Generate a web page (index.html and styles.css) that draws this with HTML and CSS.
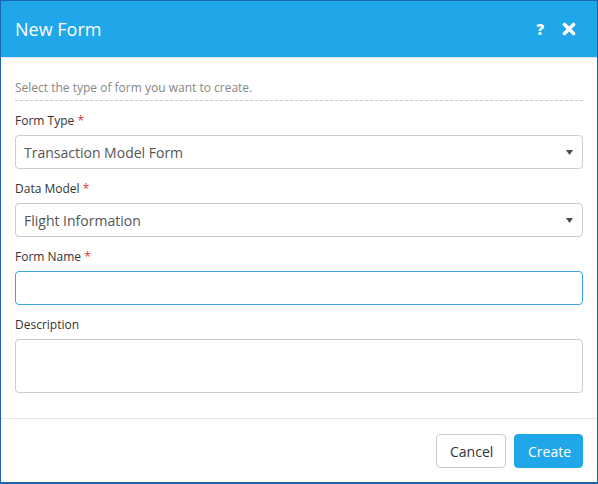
FILE: index.html
```html
<!DOCTYPE html>
<html>
<head>
<meta charset="utf-8">
<link rel="stylesheet" href="styles.css">
</head>
<body>
<div class="dialog">
  <div class="header">
    <div class="title">New Form</div>
    <div class="tools">
      <span class="help">?</span>
      <svg class="close" width="14" height="14" viewBox="0 0 14 14"><path d="M2.5 2.5 L11.5 11.5 M11.5 2.5 L2.5 11.5" stroke="#fff" stroke-width="3.6" stroke-linecap="round"/></svg>
    </div>
  </div>
  <div class="body">
    <div class="intro">Select the type of form you want to create.</div>
    <div class="group">
      <div class="label">Form Type <span class="req">*</span></div>
      <div class="select"><span>Transaction Model Form</span><svg width="7" height="5" viewBox="0 0 7 5"><path d="M0 0 H7 L3.5 5 Z" fill="#4a4a4a"/></svg></div>
    </div>
    <div class="group">
      <div class="label">Data Model <span class="req">*</span></div>
      <div class="select"><span>Flight Information</span><svg width="7" height="5" viewBox="0 0 7 5"><path d="M0 0 H7 L3.5 5 Z" fill="#4a4a4a"/></svg></div>
    </div>
    <div class="group">
      <div class="label">Form Name <span class="req">*</span></div>
      <div class="input focus"></div>
    </div>
    <div class="group">
      <div class="label">Description</div>
      <div class="textarea"></div>
    </div>
  </div>
  <div class="footer">
    <button class="btn cancel">Cancel</button>
    <button class="btn create">Create</button>
  </div>
</div>
</body>
</html>
```
FILE: styles.css
```css
html, body { margin: 0; padding: 0; }
body { font-family: "Open Sans", "Noto Sans", sans-serif; background: #fff; }
.dialog {
  width: 598px; height: 484px; box-sizing: border-box;
  border: 1px solid #1c64ad; border-bottom-width: 2px;
  display: flex; flex-direction: column; background: #fff;
}
.header {
  height: 56px; background: #1fa7ea; border-bottom: 1px solid #e3e3e3;
  display: flex; align-items: center; justify-content: space-between;
  padding: 0 14px;
}
.title { color: #fff; font-size: 18px; line-height: 24px; margin-top: -1px; }
.tools { display: flex; align-items: center; gap: 18px; padding-right: 7px; }
.help { color: #fff; font-weight: 800; font-size: 15px; line-height: 14px; }
.close { display: block; }
.body { flex: 1; padding: 0 14px; }
.intro {
  font-size: 12px; color: #888; line-height: 17px;
  padding-top: 21px; padding-bottom: 4px;
  border-bottom: 1px dashed #c8c8c8;
}
.group { margin-top: 10px; }
.label { font-size: 12px; line-height: 20px; color: #333; margin-bottom: 4px; }
.req { color: #e8322c; }
.select, .input, .textarea {
  box-sizing: border-box; border: 1px solid #ccc; border-radius: 4px; background: #fff;
}
.select {
  height: 34px; display: flex; align-items: center; justify-content: space-between;
  padding: 0 8px 0 8px; font-size: 14px; color: #555;
}
.select svg { display: block; margin-right: 1px; }
.input { height: 34px; }
.input.focus { border-color: #3aa3e0; }
.textarea { height: 54px; }
.footer {
  height: 64px; box-sizing: border-box; border-top: 1px solid #e5e5e5;
  display: flex; justify-content: flex-end; align-items: flex-start;
  padding: 15px 14px 0 0; gap: 8px;
}
.btn {
  height: 34px; box-sizing: border-box; font-family: inherit; font-size: 14px;
  border-radius: 4px; padding: 0 13px; cursor: pointer;
}
.cancel { background: #fff; border: 1px solid #ccc; color: #333; width: 70px; }
.create { background: #1fa7ea; border: 1px solid #1fa7ea; color: #fff; width: 69px; }
```
